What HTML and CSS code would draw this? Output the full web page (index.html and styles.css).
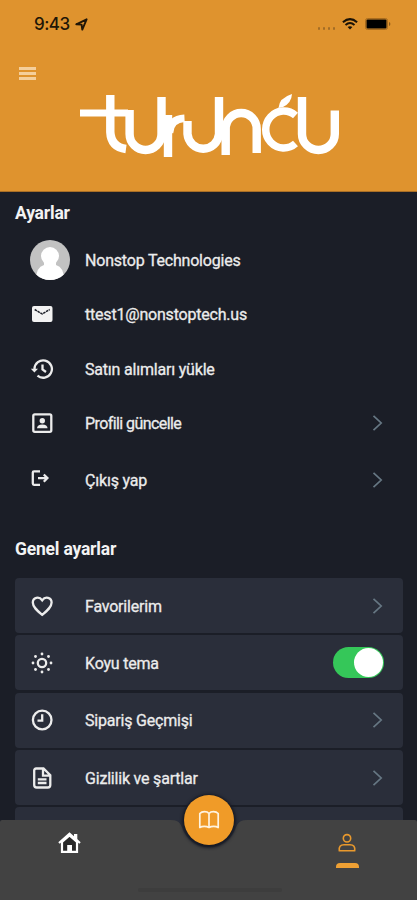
FILE: index.html
```html
<!DOCTYPE html>
<html lang="tr">
<head>
<meta charset="utf-8">
<meta name="viewport" content="width=device-width, initial-scale=1">
<title>Ayarlar</title>
<link rel="stylesheet" href="styles.css">
</head>
<body>
<div class="app">
  <header class="header">
    <div class="status">
      <span class="time">9:43</span>
      <svg class="loc" width="13" height="13" viewBox="0 0 13 13"><path d="M1.3 6.3 11.6 1.3 7.3 11.6 6.6 6.6Z" fill="none" stroke="#211607" stroke-width="1.9" stroke-linejoin="round"/></svg>
      <span class="dots"><i></i><i></i><i></i><i></i></span>
      <svg class="wifi" width="16" height="12" viewBox="0 0 16 12" fill="none" stroke="#1a1206" stroke-width="2"><path d="M.9 4.3Q8-2 15.1 4.3"/><path d="M3.5 6.9Q8 3 12.5 6.9"/><path d="M5.6 9 8 11.6 10.4 9Q8 7.4 5.6 9Z" fill="#1a1206" stroke="none"/></svg>
      <svg class="battery" width="26" height="12" viewBox="0 0 26 12"><rect x=".5" y=".5" width="22" height="11" rx="2" fill="none" stroke="#a96c1e"/><rect x="1.5" y="1.5" width="20" height="9" rx="1" fill="#000"/><path d="M24 4v4q1.4-.6 1.4-2T24 4Z" fill="#8a5a1c"/></svg>
    </div>
    <button class="menu" aria-label="Menü"><i></i><i></i><i></i></button>
    <svg class="logo" width="260" height="64" viewBox="80 94 260 64" role="img" aria-label="turuncu" fill="none" stroke="#fff" stroke-width="8.4">
      <path d="M80 113H128" stroke-width="7"/>
      <path d="M110.300 95V132Q111 147 126 149"/>
      <path d="M129.600 110V134A15.900 15.900 0 0 0 161.500 134V97"/>
      <path d="M168 157V115"/>
      <path d="M169.500 133Q170 119 184.500 118.300" stroke-width="7.500"/>
      <path d="M187.500 121V134A15.800 16 0 0 0 219 134V97"/>
      <path d="M225.700 155V129A15.500 16 0 0 1 256.700 129V153"/>
      <path d="M295.500 115.500A18 18.500 0 1 0 295.500 143.500" stroke-width="7.500"/>
      <path d="M302 97V134A16.400 16 0 0 0 334.800 134V110.500"/>
      <path d="M278.500 108Q279 98 292 94Q291.500 103 283 107Z" fill="#fff" stroke="none"/>
    </svg>
  </header>

  <main class="main">
    <h2 class="title">Ayarlar</h2>
    <ul class="account">
      <li class="row row-user">
        <svg class="avatar" width="40" height="40" viewBox="0 0 40 40"><defs><clipPath id="face"><circle cx="20" cy="20" r="20"/></clipPath></defs><g clip-path="url(#face)"><path d="M0 0H40V40H0Z" fill="#c2c2c2"/><circle cx="20" cy="16" r="9" fill="#fff"/><path d="M14 20H26V25Q34 27 34 40H6Q6 27 14 25Z" fill="#fff"/></g></svg>
        <span class="label">Nonstop Technologies</span>
      </li>
      <li class="row">
        <svg class="icon" viewBox="0 0 24 24"><rect x="2" y="4" width="20.500" height="16" rx="2" fill="#f2f2f2"/><path d="M4.700 7.500 12.200 12 19.700 7.500" fill="none" stroke="#1b1e27" stroke-width="1.500" stroke-dasharray="2.600 .7"/></svg>
        <span class="label">ttest1@nonstoptech.us</span>
      </li>
      <li class="row">
        <svg class="icon line" viewBox="0 0 24 24"><path d="M4.500 12A8.700 8.700 0 1 1 7.500 18.600M12.500 7.500V12.500L16 15"/><path d="M.8 11.700H8L4.400 15.500Z" fill="#ececec" stroke="none"/></svg>
        <span class="label">Satın alımları yükle</span>
      </li>
      <li class="row">
        <svg class="icon line" viewBox="0 0 24 24"><rect x="3.300" y="3.300" width="18" height="17.500" rx="1.500"/><circle cx="12.300" cy="9.700" r="2.700" fill="#ececec" stroke="none"/><path d="M7 17.300Q7.200 13.500 12.300 13.500T17.600 17.300Z" fill="#ececec" stroke="none"/></svg>
        <span class="label label-tight">Profili güncelle</span>
        <svg class="chev" viewBox="0 0 12 18"><path d="m1.500 1.800 7.700 7.200-7.700 7.200"/></svg>
      </li>
      <li class="row row-exit">
        <svg class="icon line" viewBox="0 0 24 24"><path d="M10 3.300H4Q2.800 3.300 2.800 4.500V15.500Q2.800 16.800 4 16.800H10M8 10.100H17M13.800 6.500 17.400 10.100 13.800 13.700"/></svg>
        <span class="label">Çıkış yap</span>
        <svg class="chev" viewBox="0 0 12 18"><path d="m1.500 1.800 7.700 7.200-7.700 7.200"/></svg>
      </li>
    </ul>

    <h2 class="title general">Genel ayarlar</h2>
    <ul class="cards">
      <li class="card">
        <svg class="icon line" viewBox="0 0 24 24"><path d="M12.200 20.800C7.500 17 2.800 13.300 2.800 8.600C2.800 3.500 9 1.700 12.200 6.300C15.400 1.700 21.600 3.500 21.600 8.600C21.600 13.300 16.900 17 12.200 20.800Z"/></svg>
        <span class="label">Favorilerim</span>
        <svg class="chev" viewBox="0 0 12 18"><path d="m1.500 1.800 7.700 7.200-7.700 7.200"/></svg>
      </li>
      <li class="card">
        <svg class="icon line" viewBox="0 0 24 24"><circle cx="12" cy="12" r="4.200"/><g fill="#ececec" stroke="none"><circle cx="12" cy="3" r="1.400"/><circle cx="12" cy="21" r="1.400"/><circle cx="3" cy="12" r="1.400"/><circle cx="21" cy="12" r="1.400"/><circle cx="5.500" cy="5.500" r="1.400"/><circle cx="18.500" cy="5.500" r="1.400"/><circle cx="5.500" cy="18.500" r="1.400"/><circle cx="18.500" cy="18.500" r="1.400"/></g></svg>
        <span class="label">Koyu tema</span>
        <span class="switch" role="switch" aria-checked="true"></span>
      </li>
      <li class="card">
        <svg class="icon line" viewBox="0 0 24 24"><circle cx="12.200" cy="12" r="9.300"/><path d="M12.200 6.300V12.600H7.500"/></svg>
        <span class="label">Sipariş Geçmişi</span>
        <svg class="chev" viewBox="0 0 12 18"><path d="m1.500 1.800 7.700 7.200-7.700 7.200"/></svg>
      </li>
      <li class="card">
        <svg class="icon line" viewBox="0 0 24 24"><path d="M6.200 2.500H13.500L20.300 9.300V19Q20.300 21.500 17.800 21.500H6.700Q4.200 21.500 4.200 19V4.500Q4.200 2.500 6.200 2.500ZM13 3V9.700H19.800M7.800 13.300H16.500M7.800 17H16.500"/></svg>
        <span class="label">Gizlilik ve şartlar</span>
        <svg class="chev" viewBox="0 0 12 18"><path d="m1.500 1.800 7.700 7.200-7.700 7.200"/></svg>
      </li>
      <li class="card"></li>
    </ul>
  </main>

  <nav class="nav">
    <svg class="nav-bg" width="417" height="81" viewBox="0 0 417 81"><path d="M0 3Q0 1 2 1H171C181 1 181 7 184 13C189 22 198 28 209 28S229 22 234 13C237 7 237 1 247 1H415Q417 1 417 3V81H0Z" fill="#424242"/></svg>
    <a class="tab"><svg width="24" height="24" viewBox="0 0 24 24"><path d="M17 3H20.300V10H17Z" fill="#fff"/><path d="M5 11V20.800H20V11L12.500 4.500Z" fill="#292929" stroke="#fff" stroke-width="2.200"/><path d="M2 12 12.500 2.800 23 12" fill="none" stroke="#fff" stroke-width="2.200"/><path d="M10.200 14H15V21H10.200Z" fill="#fff"/></svg></a>
    <a class="fab"><svg width="22" height="20" viewBox="0 0 22 20" fill="none" stroke="#fff3df" stroke-width="1.700" stroke-linejoin="round"><path d="M11 3.500Q9.500 1.700 6.500 1.700T1.800 3.500V17.500Q3.500 16.300 6.300 16.300T11 17.500Q12.900 16.300 15.700 16.300T20.200 17.500V3.500Q18.500 1.700 15.500 1.700T11 3.500V17.500"/></svg></a>
    <a class="tab tab-active"><svg width="20" height="20" viewBox="0 0 20 20" fill="none" stroke="#e9992d" stroke-width="1.600"><circle cx="10" cy="5.300" r="3.700"/><path d="M2.300 17.800Q1.500 11.800 7 11.800H13Q18.500 11.800 17.700 17.800Z" stroke-linejoin="round"/></svg><i class="mark"></i></a>
    <span class="home-bar"></span>
  </nav>
</div>
</body>
</html>
```

FILE: styles.css
```css
* { box-sizing: border-box; }
body { margin: 0; font-family: Roboto, "Liberation Sans", sans-serif; background: #1b1e27; }
ul { list-style: none; margin: 0; padding: 0; }
svg { display: block; flex: none; }
.app { position: relative; height: 900px; overflow: hidden; background: #1b1e27; color: #ececec; }

.header { height: 192px; background: #df932e; border-bottom: 1px solid #a96f26; }
.status { display: flex; align-items: center; height: 48px; padding: 0 26px 0 34px; }
.time { font: 500 17px/20px Inter, sans-serif; letter-spacing: -.5px; color: #211607; width: 37px; white-space: nowrap; }
.loc { margin-left: 4px; }
.dots { display: flex; gap: 2.500px; margin: 9px 7px 0 auto; }
.dots i { width: 2.500px; height: 2.500px; border-radius: 50%; background: #a36d26; }
.battery { margin-left: 7px; }
.menu { display: flex; flex-direction: column; gap: 2px; width: 17px; margin: 19px 0 0 19px; padding: 0; border: 0; background: none; }
.menu i { height: 3px; background: #f5cf9b; }
.logo { margin: 14px 0 0 80px; }

.main { padding: 10px 14px 0 15px; }
.title { margin: 0; font-size: 17.500px; line-height: 22px; font-weight: 700; letter-spacing: -.2px; color: #f3f3f3; }
.row, .card { display: flex; align-items: center; }
.row { height: 54.500px; padding: 0 19px 0 15px; }
.row-user { height: 54px; margin-top: 9px; }
.row-exit { height: 58px; }
.icon { width: 24px; height: 24px; }
.line { fill: none; stroke: #ececec; stroke-width: 2.300; }
.avatar { margin-right: 15px; }
.icon + .label { margin-left: 31px; }
.label { margin-top: 2px; font-size: 16px; line-height: 22px; letter-spacing: -.2px; white-space: nowrap; -webkit-text-stroke: .3px; }
.label-tight { letter-spacing: -.58px; }
.chev { width: 12px; height: 18px; margin-left: auto; fill: none; stroke: #667783; stroke-width: 1.700; }
.general { margin-top: 29px; }
.cards { display: flex; flex-direction: column; gap: 2.300px; margin-top: 18.700px; }
.card { height: 55px; padding: 0 19px 0 15px; border-radius: 4px; background: #2a2e3a; }
.switch { display: flex; justify-content: flex-end; align-items: center; width: 51px; height: 31px; margin: 0 0 0 auto; padding: 1px; border-radius: 16px; background: #35c759; }
.switch::after { content: ""; width: 29px; height: 29px; border-radius: 50%; background: #fff; }

.nav { position: absolute; left: 0; right: 0; bottom: 0; height: 81px; display: flex; justify-content: space-between; padding: 0 60px 0 57px; }
.nav-bg { position: absolute; left: 0; top: 0; }
.tab { position: relative; display: flex; flex-direction: column; align-items: center; padding-top: 12px; width: 24px; }
.fab { position: absolute; left: 184px; top: -24px; width: 50px; height: 50px; display: flex; align-items: center; justify-content: center; border-radius: 50%; background: #f09b28; box-shadow: 0 1px 3px 2px #171a24; }
.tab-active { padding-top: 14px; width: 20px; }
.mark { flex: none; width: 23px; height: 4.500px; margin-top: 10px; border-radius: 4px 4px 0 0; background: #eea034; }
.home-bar { position: absolute; left: 138px; bottom: 8px; width: 144px; height: 4px; border-radius: 2px; background: #3d3d3d; }
```
